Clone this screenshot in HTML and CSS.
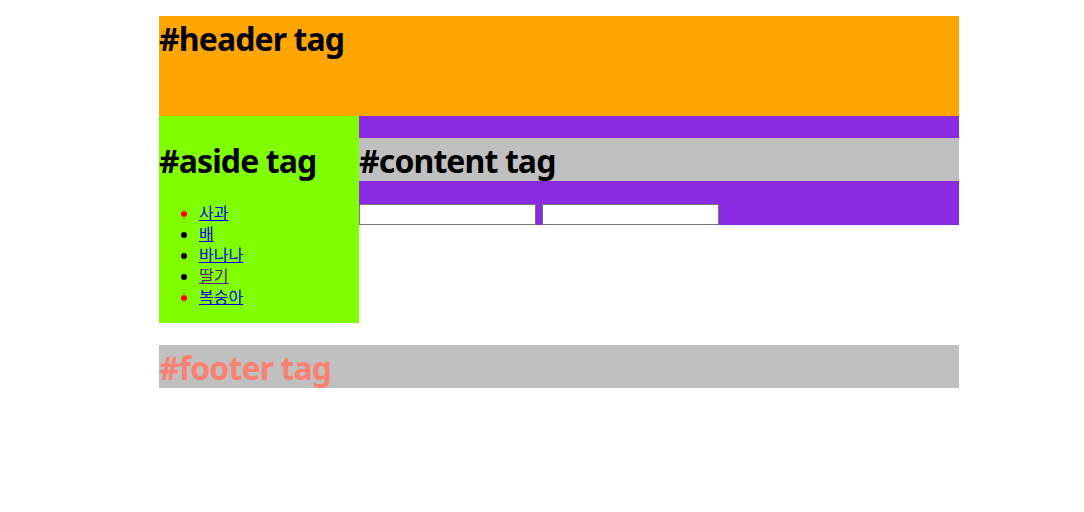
FILE: index.html
```html
<!DOCTYPE html>
<html lang="ko">
<head>
<meta charset="utf-8">
<title>Layout</title>
<link rel="stylesheet" href="styles.css">
</head>
<body>
<div class="wrap">
  <header class="header"><h1 class="title">#header tag</h1></header>
  <div class="main">
    <aside class="aside">
      <h1 class="title aside-title">#aside tag</h1>
      <ul class="fruits">
        <li class="hot"><a href="#a">사과</a></li>
        <li><a href="#b">배</a></li>
        <li><a href="#c">바나나</a></li>
        <li><a class="visited" href="#d">딸기</a></li>
        <li class="hot"><a href="#e">복숭아</a></li>
      </ul>
    </aside>
    <section class="content">
      <h1 class="title content-title">#content tag</h1>
      <div class="inputs">
        <input class="field" type="text">
        <input class="field" type="text">
      </div>
    </section>
  </div>
  <footer class="footer"><h1 class="title footer-title">#footer tag</h1></footer>
</div>
</body>
</html>
```

FILE: styles.css
```css
body {
  margin: 0;
  font-family: "Noto Sans", "Noto Sans CJK KR", sans-serif;
  font-size: 16px;
  line-height: 21px;
  background: #fff;
}
.wrap {
  width: 800px;
  margin: 16px 0 0 159px;
}
.title {
  font-size: 32px;
  line-height: 41px;
  padding-top: 2px;
  letter-spacing: -0.9px;
  font-weight: bold;
  margin: 0;
  color: #000;
}
.header {
  height: 100px;
  background: #ffa500;
}
.main {
  display: flex;
  align-items: flex-start;
}
.aside {
  width: 200px;
  background: #7fff00;
  padding: 22px 0 15px;
}
.aside-title {
  margin-bottom: 22px;
}
.fruits {
  margin: 0;
  padding-left: 40px;
}
.fruits a {
  color: #0000ee;
}
.fruits a.visited {
  color: #551a8b;
}
.hot {
  color: #ff0000;
}
.content {
  width: 600px;
  background: #8a2be2;
  padding-top: 22px;
}
.content-title {
  background: #c0c0c0;
  margin-bottom: 23px;
}
.inputs {
  display: flex;
  gap: 6px;
}
.field {
  box-sizing: border-box;
  width: 177px;
  height: 21px;
  margin: 0;
  border: 1px solid #767676;
  background: #fff;
  padding: 1px 2px;
}
.footer {
  margin-top: 22px;
  background: #c0c0c0;
}
.footer-title {
  color: #fa8072;
}
```
